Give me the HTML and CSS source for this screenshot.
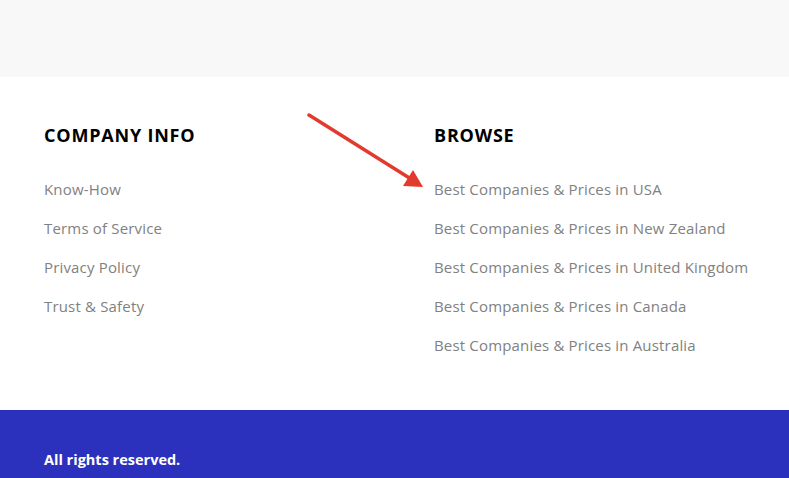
FILE: index.html
```html
<!DOCTYPE html>
<html>
<head>
<meta charset="utf-8">
<link rel="stylesheet" href="styles.css">
</head>
<body>
<div class="top-band"></div>
<section class="links">
  <div class="col col-company">
    <h3 class="col-title">COMPANY INFO</h3>
    <ul class="link-list">
      <li><a href="#">Know-How</a></li>
      <li><a href="#">Terms of Service</a></li>
      <li><a href="#">Privacy Policy</a></li>
      <li><a href="#">Trust &amp; Safety</a></li>
    </ul>
  </div>
  <div class="col col-browse">
    <h3 class="col-title">BROWSE</h3>
    <ul class="link-list">
      <li><a href="#">Best Companies &amp; Prices in USA</a></li>
      <li><a href="#">Best Companies &amp; Prices in New Zealand</a></li>
      <li><a href="#">Best Companies &amp; Prices in United Kingdom</a></li>
      <li><a href="#">Best Companies &amp; Prices in Canada</a></li>
      <li><a href="#">Best Companies &amp; Prices in Australia</a></li>
    </ul>
  </div>
  <svg class="arrow" width="130" height="90" viewBox="0 0 130 90">
    <line x1="2" y1="2" x2="104" y2="66" stroke="#e23a2c" stroke-width="3.5" stroke-linecap="round"/>
    <polygon points="116,74 96,73 106,57" fill="#e23a2c"/>
  </svg>
</section>
<footer class="bottom">
  <p class="rights">All rights reserved.</p>
</footer>
</body>
</html>
```
FILE: styles.css
```css
html, body {
  margin: 0;
  padding: 0;
}
body {
  font-family: "Open Sans", "Liberation Sans", sans-serif;
  background: #ffffff;
  overflow: hidden;
}
.top-band {
  height: 77px;
  background: #f8f8f8;
}
.links {
  position: relative;
  display: flex;
  padding: 45px 0 0 44px;
  height: 288px;
}
.col-company {
  flex: 0 0 390px;
}
.col-browse {
  flex: 0 0 auto;
  white-space: nowrap;
}
.col-title {
  margin: 0 0 30px;
  font-size: 18px;
  font-weight: 700;
  line-height: 26px;
  color: #000;
  letter-spacing: 0.8px;
}
.link-list {
  list-style: none;
  margin: 0;
  padding: 0;
  display: flex;
  flex-direction: column;
  gap: 17px;
}
.link-list li {
  line-height: 22px;
  white-space: nowrap;
}
.link-list a {
  font-size: 15px;
  color: #818181;
  text-decoration: none;
  letter-spacing: 0.17px;
}
.arrow {
  position: absolute;
  left: 307px;
  top: 36px;
}
.bottom {
  background: #2b31bd;
  height: 68px;
  padding: 0 44px;
  display: flex;
  align-items: flex-start;
}
.rights {
  margin: 40px 0 0;
  color: #fff;
  font-weight: 700;
  font-size: 14.5px;
}
```
